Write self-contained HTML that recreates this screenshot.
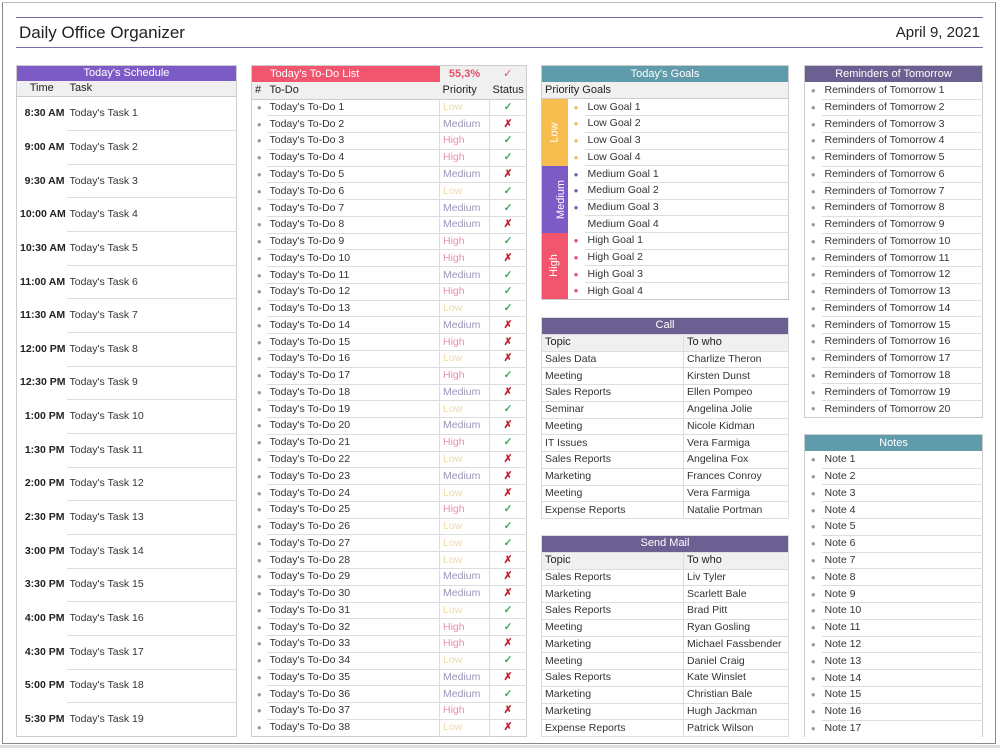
<!DOCTYPE html>
<html><head><meta charset="utf-8"><style>
*{box-sizing:border-box;margin:0;padding:0}
body{width:1000px;height:748px;background:#fff;font-family:"Liberation Sans",sans-serif;font-size:10.5px;color:#333;position:relative;overflow:hidden}
.frame{position:absolute;left:2px;top:2px;width:994px;height:742px;border:1px solid #888;border-top-color:#bbb}
.bot{position:absolute;left:0;top:745px;width:1000px;height:3px;background:#ddd}
.l1{position:absolute;left:16px;width:967px;height:1px;background:#7a68a8}
.title{position:absolute;left:19px;top:23px;font-size:17px;color:#222}
.date{position:absolute;right:20px;top:24px;font-size:15px;color:#222}
table{position:absolute;border-collapse:collapse;table-layout:fixed;border:1px solid #ccc}
td{padding:0 3px;white-space:nowrap;overflow:hidden;height:14px;line-height:13px}
.h td{color:#fff;text-align:center;font-size:11px}
.c td{background:#f0f0f0;font-size:11px;color:#222;border-bottom:1px solid #ccc}
.b{color:#999;text-align:center;font-size:8px}
.ln{border-bottom:1px solid #ddd}
.sched td{height:30px}
.sched .c td,.sched .h td{height:14px}
.tm{font-weight:bold;text-align:right;color:#222;padding-right:2px}
.pr{border-left:1px solid #ddd;border-right:1px solid #ddd}
.st{text-align:center;font-weight:bold}
.ok{color:#3aaa5a}.no{color:#c02030}
.Low{color:#f0dca0}.Medium{color:#9a94b8}.High{color:#ec90a8}
.gv{color:#fff;text-align:center;padding:0}
.gv span{display:inline-block;transform:rotate(-90deg);font-size:11px}
.bd td{border:1px solid #ddd}
</style></head><body>
<div class="frame"></div><div class="bot"></div>
<div class="l1" style="top:17px"></div><div class="l1" style="top:47px"></div>
<div class="title">Daily Office Organizer</div><div class="date">April 9, 2021</div>

<table class="sched" style="left:16px;top:65px;width:221px;height:672px">
<col style="width:50px"><col>
<tr class="h"><td colspan="2" style="background:#7d5bc6">Today's Schedule</td></tr>
<tr class="c"><td style="text-align:center">Time</td><td>Task</td></tr>
<tr><td class="tm">8:30 AM</td><td class="ln">Today's Task 1</td></tr>
<tr><td class="tm">9:00 AM</td><td class="ln">Today's Task 2</td></tr>
<tr><td class="tm">9:30 AM</td><td class="ln">Today's Task 3</td></tr>
<tr><td class="tm">10:00 AM</td><td class="ln">Today's Task 4</td></tr>
<tr><td class="tm">10:30 AM</td><td class="ln">Today's Task 5</td></tr>
<tr><td class="tm">11:00 AM</td><td class="ln">Today's Task 6</td></tr>
<tr><td class="tm">11:30 AM</td><td class="ln">Today's Task 7</td></tr>
<tr><td class="tm">12:00 PM</td><td class="ln">Today's Task 8</td></tr>
<tr><td class="tm">12:30 PM</td><td class="ln">Today's Task 9</td></tr>
<tr><td class="tm">1:00 PM</td><td class="ln">Today's Task 10</td></tr>
<tr><td class="tm">1:30 PM</td><td class="ln">Today's Task 11</td></tr>
<tr><td class="tm">2:00 PM</td><td class="ln">Today's Task 12</td></tr>
<tr><td class="tm">2:30 PM</td><td class="ln">Today's Task 13</td></tr>
<tr><td class="tm">3:00 PM</td><td class="ln">Today's Task 14</td></tr>
<tr><td class="tm">3:30 PM</td><td class="ln">Today's Task 15</td></tr>
<tr><td class="tm">4:00 PM</td><td class="ln">Today's Task 16</td></tr>
<tr><td class="tm">4:30 PM</td><td class="ln">Today's Task 17</td></tr>
<tr><td class="tm">5:00 PM</td><td class="ln">Today's Task 18</td></tr>
<tr><td class="tm">5:30 PM</td><td>Today's Task 19</td></tr>
</table>

<table style="left:251px;top:65px;width:276px;height:672px">
<col style="width:15px"><col style="width:173px"><col style="width:50px"><col>
<tr class="h"><td colspan="2" style="background:#f2566f;text-align:left;padding-left:18px">Today's To-Do List</td><td style="background:#f0f0f0;color:#e0506a;font-weight:bold">55,3%</td><td style="background:#f0f0f0;color:#e0506a">✓</td></tr>
<tr class="c"><td>#</td><td>To-Do</td><td>Priority</td><td style="text-align:center">Status</td></tr>
<tr><td class="b">●</td><td class="ln">Today's To-Do 1</td><td class="pr ln Low">Low</td><td class="st ok ln">✓</td></tr>
<tr><td class="b">●</td><td class="ln">Today's To-Do 2</td><td class="pr ln Medium">Medium</td><td class="st no ln">✗</td></tr>
<tr><td class="b">●</td><td class="ln">Today's To-Do 3</td><td class="pr ln High">High</td><td class="st ok ln">✓</td></tr>
<tr><td class="b">●</td><td class="ln">Today's To-Do 4</td><td class="pr ln High">High</td><td class="st ok ln">✓</td></tr>
<tr><td class="b">●</td><td class="ln">Today's To-Do 5</td><td class="pr ln Medium">Medium</td><td class="st no ln">✗</td></tr>
<tr><td class="b">●</td><td class="ln">Today's To-Do 6</td><td class="pr ln Low">Low</td><td class="st ok ln">✓</td></tr>
<tr><td class="b">●</td><td class="ln">Today's To-Do 7</td><td class="pr ln Medium">Medium</td><td class="st ok ln">✓</td></tr>
<tr><td class="b">●</td><td class="ln">Today's To-Do 8</td><td class="pr ln Medium">Medium</td><td class="st no ln">✗</td></tr>
<tr><td class="b">●</td><td class="ln">Today's To-Do 9</td><td class="pr ln High">High</td><td class="st ok ln">✓</td></tr>
<tr><td class="b">●</td><td class="ln">Today's To-Do 10</td><td class="pr ln High">High</td><td class="st no ln">✗</td></tr>
<tr><td class="b">●</td><td class="ln">Today's To-Do 11</td><td class="pr ln Medium">Medium</td><td class="st ok ln">✓</td></tr>
<tr><td class="b">●</td><td class="ln">Today's To-Do 12</td><td class="pr ln High">High</td><td class="st ok ln">✓</td></tr>
<tr><td class="b">●</td><td class="ln">Today's To-Do 13</td><td class="pr ln Low">Low</td><td class="st ok ln">✓</td></tr>
<tr><td class="b">●</td><td class="ln">Today's To-Do 14</td><td class="pr ln Medium">Medium</td><td class="st no ln">✗</td></tr>
<tr><td class="b">●</td><td class="ln">Today's To-Do 15</td><td class="pr ln High">High</td><td class="st no ln">✗</td></tr>
<tr><td class="b">●</td><td class="ln">Today's To-Do 16</td><td class="pr ln Low">Low</td><td class="st no ln">✗</td></tr>
<tr><td class="b">●</td><td class="ln">Today's To-Do 17</td><td class="pr ln High">High</td><td class="st ok ln">✓</td></tr>
<tr><td class="b">●</td><td class="ln">Today's To-Do 18</td><td class="pr ln Medium">Medium</td><td class="st no ln">✗</td></tr>
<tr><td class="b">●</td><td class="ln">Today's To-Do 19</td><td class="pr ln Low">Low</td><td class="st ok ln">✓</td></tr>
<tr><td class="b">●</td><td class="ln">Today's To-Do 20</td><td class="pr ln Medium">Medium</td><td class="st no ln">✗</td></tr>
<tr><td class="b">●</td><td class="ln">Today's To-Do 21</td><td class="pr ln High">High</td><td class="st ok ln">✓</td></tr>
<tr><td class="b">●</td><td class="ln">Today's To-Do 22</td><td class="pr ln Low">Low</td><td class="st no ln">✗</td></tr>
<tr><td class="b">●</td><td class="ln">Today's To-Do 23</td><td class="pr ln Medium">Medium</td><td class="st no ln">✗</td></tr>
<tr><td class="b">●</td><td class="ln">Today's To-Do 24</td><td class="pr ln Low">Low</td><td class="st no ln">✗</td></tr>
<tr><td class="b">●</td><td class="ln">Today's To-Do 25</td><td class="pr ln High">High</td><td class="st ok ln">✓</td></tr>
<tr><td class="b">●</td><td class="ln">Today's To-Do 26</td><td class="pr ln Low">Low</td><td class="st ok ln">✓</td></tr>
<tr><td class="b">●</td><td class="ln">Today's To-Do 27</td><td class="pr ln Low">Low</td><td class="st ok ln">✓</td></tr>
<tr><td class="b">●</td><td class="ln">Today's To-Do 28</td><td class="pr ln Low">Low</td><td class="st no ln">✗</td></tr>
<tr><td class="b">●</td><td class="ln">Today's To-Do 29</td><td class="pr ln Medium">Medium</td><td class="st no ln">✗</td></tr>
<tr><td class="b">●</td><td class="ln">Today's To-Do 30</td><td class="pr ln Medium">Medium</td><td class="st no ln">✗</td></tr>
<tr><td class="b">●</td><td class="ln">Today's To-Do 31</td><td class="pr ln Low">Low</td><td class="st ok ln">✓</td></tr>
<tr><td class="b">●</td><td class="ln">Today's To-Do 32</td><td class="pr ln High">High</td><td class="st ok ln">✓</td></tr>
<tr><td class="b">●</td><td class="ln">Today's To-Do 33</td><td class="pr ln High">High</td><td class="st no ln">✗</td></tr>
<tr><td class="b">●</td><td class="ln">Today's To-Do 34</td><td class="pr ln Low">Low</td><td class="st ok ln">✓</td></tr>
<tr><td class="b">●</td><td class="ln">Today's To-Do 35</td><td class="pr ln Medium">Medium</td><td class="st no ln">✗</td></tr>
<tr><td class="b">●</td><td class="ln">Today's To-Do 36</td><td class="pr ln Medium">Medium</td><td class="st ok ln">✓</td></tr>
<tr><td class="b">●</td><td class="ln">Today's To-Do 37</td><td class="pr ln High">High</td><td class="st no ln">✗</td></tr>
<tr><td class="b">●</td><td>Today's To-Do 38</td><td class="pr Low">Low</td><td class="st no">✗</td></tr>
</table>

<table style="left:541px;top:65px;width:248px;height:235px">
<col style="width:26px"><col style="width:17px"><col>
<tr class="h"><td colspan="3" style="background:#5f9bab">Today's Goals</td></tr>
<tr class="c"><td colspan="3">Priority&nbsp;Goals</td></tr>
<tr><td rowspan="4" class="gv" style="background:#f7bd4f"><span>Low</span></td><td class="b" style="color:#f0c060">●</td><td class="ln">Low Goal 1</td></tr>
<tr><td class="b" style="color:#f0c060">●</td><td class="ln">Low Goal 2</td></tr>
<tr><td class="b" style="color:#f0c060">●</td><td class="ln">Low Goal 3</td></tr>
<tr><td class="b" style="color:#f0c060">●</td><td class="ln">Low Goal 4</td></tr>
<tr><td rowspan="4" class="gv" style="background:#7d5bc6"><span>Medium</span></td><td class="b" style="color:#7060b0">●</td><td class="ln">Medium Goal 1</td></tr>
<tr><td class="b" style="color:#7060b0">●</td><td class="ln">Medium Goal 2</td></tr>
<tr><td class="b" style="color:#7060b0">●</td><td class="ln">Medium Goal 3</td></tr>
<tr><td class="b"></td><td class="ln">Medium Goal 4</td></tr>
<tr><td rowspan="4" class="gv" style="background:#f2566f"><span>High</span></td><td class="b" style="color:#e05070">●</td><td class="ln">High Goal 1</td></tr>
<tr><td class="b" style="color:#e05070">●</td><td class="ln">High Goal 2</td></tr>
<tr><td class="b" style="color:#e05070">●</td><td class="ln">High Goal 3</td></tr>
<tr><td class="b" style="color:#e05070">●</td><td>High Goal 4</td></tr>
</table>

<table class="bd" style="left:541px;top:317px;width:248px;height:202px">
<col style="width:142px"><col>
<tr class="h"><td colspan="2" style="background:#6c5f91">Call</td></tr>
<tr class="c"><td>Topic</td><td>To who</td></tr>
<tr><td>Sales Data</td><td>Charlize Theron</td></tr>
<tr><td>Meeting</td><td>Kirsten Dunst</td></tr>
<tr><td>Sales Reports</td><td>Ellen Pompeo</td></tr>
<tr><td>Seminar</td><td>Angelina Jolie</td></tr>
<tr><td>Meeting</td><td>Nicole Kidman</td></tr>
<tr><td>IT Issues</td><td>Vera Farmiga</td></tr>
<tr><td>Sales Reports</td><td>Angelina Fox</td></tr>
<tr><td>Marketing</td><td>Frances Conroy</td></tr>
<tr><td>Meeting</td><td>Vera Farmiga</td></tr>
<tr><td>Expense Reports</td><td>Natalie Portman</td></tr>
</table>

<table class="bd" style="left:541px;top:535px;width:248px;height:202px">
<col style="width:142px"><col>
<tr class="h"><td colspan="2" style="background:#6c5f91">Send Mail</td></tr>
<tr class="c"><td>Topic</td><td>To who</td></tr>
<tr><td>Sales Reports</td><td>Liv Tyler</td></tr>
<tr><td>Marketing</td><td>Scarlett Bale</td></tr>
<tr><td>Sales Reports</td><td>Brad Pitt</td></tr>
<tr><td>Meeting</td><td>Ryan Gosling</td></tr>
<tr><td>Marketing</td><td>Michael Fassbender</td></tr>
<tr><td>Meeting</td><td>Daniel Craig</td></tr>
<tr><td>Sales Reports</td><td>Kate Winslet</td></tr>
<tr><td>Marketing</td><td>Christian Bale</td></tr>
<tr><td>Marketing</td><td>Hugh Jackman</td></tr>
<tr><td>Expense Reports</td><td>Patrick Wilson</td></tr>
</table>

<table style="left:804px;top:65px;width:179px;height:353px">
<col style="width:17px"><col>
<tr class="h"><td colspan="2" style="background:#6c5f91">Reminders of Tomorrow</td></tr>
<tr><td class="b">●</td><td class="ln">Reminders of Tomorrow 1</td></tr>
<tr><td class="b">●</td><td class="ln">Reminders of Tomorrow 2</td></tr>
<tr><td class="b">●</td><td class="ln">Reminders of Tomorrow 3</td></tr>
<tr><td class="b">●</td><td class="ln">Reminders of Tomorrow 4</td></tr>
<tr><td class="b">●</td><td class="ln">Reminders of Tomorrow 5</td></tr>
<tr><td class="b">●</td><td class="ln">Reminders of Tomorrow 6</td></tr>
<tr><td class="b">●</td><td class="ln">Reminders of Tomorrow 7</td></tr>
<tr><td class="b">●</td><td class="ln">Reminders of Tomorrow 8</td></tr>
<tr><td class="b">●</td><td class="ln">Reminders of Tomorrow 9</td></tr>
<tr><td class="b">●</td><td class="ln">Reminders of Tomorrow 10</td></tr>
<tr><td class="b">●</td><td class="ln">Reminders of Tomorrow 11</td></tr>
<tr><td class="b">●</td><td class="ln">Reminders of Tomorrow 12</td></tr>
<tr><td class="b">●</td><td class="ln">Reminders of Tomorrow 13</td></tr>
<tr><td class="b">●</td><td class="ln">Reminders of Tomorrow 14</td></tr>
<tr><td class="b">●</td><td class="ln">Reminders of Tomorrow 15</td></tr>
<tr><td class="b">●</td><td class="ln">Reminders of Tomorrow 16</td></tr>
<tr><td class="b">●</td><td class="ln">Reminders of Tomorrow 17</td></tr>
<tr><td class="b">●</td><td class="ln">Reminders of Tomorrow 18</td></tr>
<tr><td class="b">●</td><td class="ln">Reminders of Tomorrow 19</td></tr>
<tr><td class="b">●</td><td>Reminders of Tomorrow 20</td></tr>
</table>

<table style="left:804px;top:434px;width:179px;height:303px;border-bottom:none">
<col style="width:17px"><col>
<tr class="h"><td colspan="2" style="background:#5f9bab">Notes</td></tr>
<tr><td class="b">●</td><td class="ln">Note 1</td></tr>
<tr><td class="b">●</td><td class="ln">Note 2</td></tr>
<tr><td class="b">●</td><td class="ln">Note 3</td></tr>
<tr><td class="b">●</td><td class="ln">Note 4</td></tr>
<tr><td class="b">●</td><td class="ln">Note 5</td></tr>
<tr><td class="b">●</td><td class="ln">Note 6</td></tr>
<tr><td class="b">●</td><td class="ln">Note 7</td></tr>
<tr><td class="b">●</td><td class="ln">Note 8</td></tr>
<tr><td class="b">●</td><td class="ln">Note 9</td></tr>
<tr><td class="b">●</td><td class="ln">Note 10</td></tr>
<tr><td class="b">●</td><td class="ln">Note 11</td></tr>
<tr><td class="b">●</td><td class="ln">Note 12</td></tr>
<tr><td class="b">●</td><td class="ln">Note 13</td></tr>
<tr><td class="b">●</td><td class="ln">Note 14</td></tr>
<tr><td class="b">●</td><td class="ln">Note 15</td></tr>
<tr><td class="b">●</td><td class="ln">Note 16</td></tr>
<tr><td class="b">●</td><td>Note 17</td></tr>
</table>
</body></html>
